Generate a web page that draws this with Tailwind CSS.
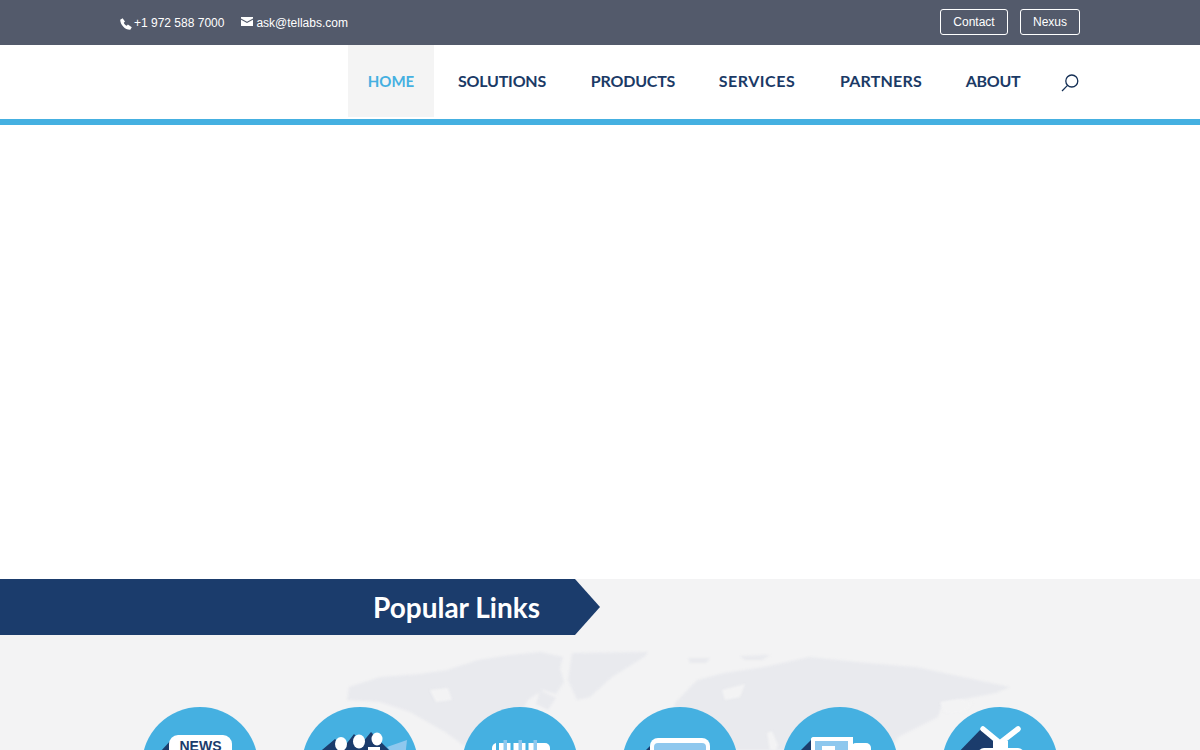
<!DOCTYPE html>
<html lang="en">
<head>
  <meta charset="UTF-8" />
  <title>Tellabs</title>
  <script src="https://cdn.jsdelivr.net/npm/@tailwindcss/browser@4"></script>
</head>
<body class="bg-white h-screen overflow-hidden flex flex-col font-['Liberation_Sans',sans-serif]">

  <!-- Top bar -->
  <div class="bg-[#535a6b] h-[45px] shrink-0 text-white text-xs">
    <div class="w-[960px] mx-auto flex justify-between items-center h-full">
      <div class="flex items-center pt-[1px]">
        <svg class="w-[12px] h-[12px] mr-[2px] mt-[2px]" viewBox="0 0 12 12"><path fill="#fff" d="M.2 1.800 2.600.2 5 3.400 3.800 4.700c.5 1.300 1.500 2.300 2.900 3L7.900 6.500 11.800 9.200 10.300 11.800C5 12 .3 6.800.2 1.800Z"/></svg>
        <span>+1 972 588 7000</span>
        <svg class="w-[12px] h-[9px] ml-[17px] mr-[3px] mb-[3px]" viewBox="0 0 13 10" preserveAspectRatio="none"><path fill="#fff" d="M0 0h13v1.600L6.500 5.200 0 1.600ZM0 3 6.500 6.600 13 3V10H0Z"/></svg>
        <span>ask@tellabs.com</span>
      </div>
      <div class="flex gap-3 -mt-[1px]">
        <a href="#" class="h-[26px] w-[68px] flex items-center justify-center border border-white rounded-[3px]">Contact</a>
        <a href="#" class="h-[26px] w-[60px] flex items-center justify-center border border-white rounded-[3px]">Nexus</a>
      </div>
    </div>
  </div>

  <!-- Nav -->
  <nav class="h-[80px] shrink-0 border-b-[6px] border-[#45b0e1] bg-white">
    <div class="w-[960px] mx-auto h-[72px] flex items-start justify-end pr-[1px] font-['Lato',sans-serif] font-bold text-[16px] text-[#1b3a66] whitespace-nowrap">
      <a href="#" class="h-[72px] w-[86px] bg-[#f4f4f4] text-[#45b0e1] text-[15px] flex items-center justify-center">HOME</a>
      <a href="#" class="h-[72px] w-[88px] ml-[24px] flex items-center justify-center tracking-[-0.2px]">SOLUTIONS</a>
      <a href="#" class="h-[72px] w-[84px] ml-[45px] flex items-center justify-center tracking-[-0.2px]">PRODUCTS</a>
      <a href="#" class="h-[72px] w-[76px] ml-[44px] flex items-center justify-center tracking-[0.5px]">SERVICES</a>
      <a href="#" class="h-[72px] w-[82px] ml-[45px] flex items-center justify-center tracking-[0.2px]">PARTNERS</a>
      <a href="#" class="h-[72px] w-[54px] ml-[44px] flex items-center justify-center tracking-[-0.3px]">ABOUT</a>
      <div class="h-[72px] ml-[41px] flex items-center">
        <svg class="w-[18px] h-[18px] mt-[3px]" viewBox="0 0 18 18" fill="none" stroke="#142f55" stroke-width="1.300"><circle cx="10.800" cy="7" r="6"/><path d="M6.500 11.400 1 17"/></svg>
      </div>
    </div>
  </nav>

  <!-- Empty slider area -->
  <div class="h-[454px] shrink-0 bg-white"></div>

  <!-- Popular links -->
  <section class="relative flex-1 bg-[#f3f3f4] overflow-hidden">
    <!-- world map, page coords minus (0,579) -->
    <svg class="absolute left-0 top-0 w-[1200px] h-[171px] blur-[1px]" viewBox="0 579 1200 171" fill="#e9eaee">
      <path d="M347 700 349 687 380 677 420 674 447 670 478 660 510 655 541 652 563 657 560 668 564 682 556 694 543 690 528 700 520 716 540 740 548 750 470 750 445 732 410 712 380 702Z"/>
      <path d="M648 652 572 653 568 680 577 700 590 697 612 677 644 657Z"/>
      <path d="M675 703 697 680 724 673 764 667 809 657 867 663 916 667 1010 687 996 693 943 703 938 717 898 737 890 750 680 750 672 725Z"/>
      <path d="M688 658 710 658 706 663 690 663Z"/>
      <path d="M740 656 770 655 762 660 745 660Z"/>
      <path d="M470 668 488 662 496 668 478 674Z"/>
      <path d="M540 690 556 698 548 710 536 704Z"/>
      <path d="M1005 718 1012 716 1008 735 1002 738Z"/>
    </svg>
    <svg class="absolute left-0 top-0 w-[1200px] h-[171px] blur-[1px]" viewBox="0 579 1200 171" fill="#f3f3f4">
      <path d="M940 702 960 699 973 703 965 712 945 713Z"/>
      <path d="M767 733 772 731 778 745 776 750 770 750Z"/>
      <path d="M722 690 745 684 740 697 725 700Z"/>
      <path d="M430 690 448 688 452 700 436 702Z"/>
    </svg>

    <div class="relative h-[56px] w-[600px] bg-[#1b3c6c] [clip-path:polygon(0_0,575px_0,100%_50%,575px_100%,0_100%)] flex items-center justify-end pr-[60px]">
      <h2 class="font-['Lato',sans-serif] font-bold text-[28px] text-white -mt-[1px]">Popular Links</h2>
    </div>

    <div class="relative flex justify-center gap-[44px] mt-[72px]">
      <!-- news -->
      <a href="#" class="relative block w-[116px] h-[116px] rounded-full overflow-hidden bg-[#45b0e1]">
        <svg class="absolute inset-0" width="116" height="116" viewBox="0 0 116 116"><path fill="#1b3c6c" d="M30 32-5 70H30Z"/></svg>
        <div class="absolute left-[27px] top-[28px] w-[63px] h-[40px] bg-white rounded-[9px] text-center text-[14px] leading-[20px] font-bold text-[#1b3c6c] pt-[1px]">NEWS</div>
      </a>
      <!-- people -->
      <a href="#" class="relative block w-[116px] h-[116px] rounded-full overflow-hidden bg-[#45b0e1]">
        <svg class="absolute inset-0" width="116" height="116" viewBox="0 0 116 116">
          <path fill="#8ec8ee" d="M105 33 85 40 102 60Z"/>
          <path fill="#1b3c6c" d="M14 48 33 32 42 40 52 27 60 36 69 25 80 36 88 44V70H14Z"/>
          <ellipse cx="39" cy="37" rx="6" ry="7" fill="#fff"/>
          <ellipse cx="57" cy="34.500" rx="6" ry="7" fill="#fff"/>
          <ellipse cx="75" cy="32" rx="5.500" ry="6.500" fill="#fff"/>
          <path fill="#fff" d="M66 40h12V70H66Z"/>
        </svg>
      </a>
      <!-- rack -->
      <a href="#" class="relative block w-[116px] h-[116px] rounded-full overflow-hidden bg-[#45b0e1]">
        <svg class="absolute inset-0" width="116" height="116" viewBox="0 0 116 116">
          <path fill="#1b3c6c" d="M34 39 20 53V70H40V39Z"/>
          <rect x="30" y="36" width="58" height="30" rx="5" fill="#fff"/>
          <rect x="34" y="34" width="3" height="20" fill="#45b0e1"/>
          <rect x="41.500" y="33" width="3.500" height="20" fill="#8ec8ee"/>
          <rect x="48.500" y="34" width="3" height="20" fill="#45b0e1"/>
          <rect x="56.500" y="33" width="3.500" height="20" fill="#8ec8ee"/>
          <rect x="63.500" y="34" width="3" height="20" fill="#45b0e1"/>
          <rect x="71.500" y="33" width="3.500" height="20" fill="#8ec8ee"/>
        </svg>
      </a>
      <!-- monitor -->
      <a href="#" class="relative block w-[116px] h-[116px] rounded-full overflow-hidden bg-[#45b0e1]">
        <svg class="absolute inset-0" width="116" height="116" viewBox="0 0 116 116">
          <path fill="#1b3c6c" d="M34 33 14 53V70H34Z"/>
          <rect x="28" y="31" width="60" height="40" rx="8" fill="#fff"/>
          <rect x="32" y="36" width="52" height="30" rx="4" fill="#8ec8ee"/>
        </svg>
      </a>
      <!-- truck -->
      <a href="#" class="relative block w-[116px] h-[116px] rounded-full overflow-hidden bg-[#45b0e1]">
        <svg class="absolute inset-0" width="116" height="116" viewBox="0 0 116 116">
          <path fill="#1b3c6c" d="M30 32 10 52V70H30Z"/>
          <rect x="69" y="36" width="20" height="30" rx="5" fill="#fff"/>
          <path fill="#fff" d="M29 32c0-1 1-2 2-2h40V70H29Z"/>
          <rect x="33" y="34" width="33" height="30" fill="#8ec8ee"/>
          <rect x="40" y="39" width="13" height="12" fill="#fff"/>
        </svg>
      </a>
      <!-- tv -->
      <a href="#" class="relative block w-[116px] h-[116px] rounded-full overflow-hidden bg-[#45b0e1]">
        <svg class="absolute inset-0" width="116" height="116" viewBox="0 0 116 116">
          <path fill="#1b3c6c" d="M40 21 10 52V70H58V42L52 35Z"/>
          <path d="M41 22 58 36 76 22" fill="none" stroke="#fff" stroke-width="5.500" stroke-linecap="round"/>
          <rect x="51" y="34" width="15" height="8" fill="#fff"/>
          <rect x="36" y="41" width="46" height="30" rx="6" fill="#fff"/>
        </svg>
      </a>
    </div>
  </section>

</body>
</html>
